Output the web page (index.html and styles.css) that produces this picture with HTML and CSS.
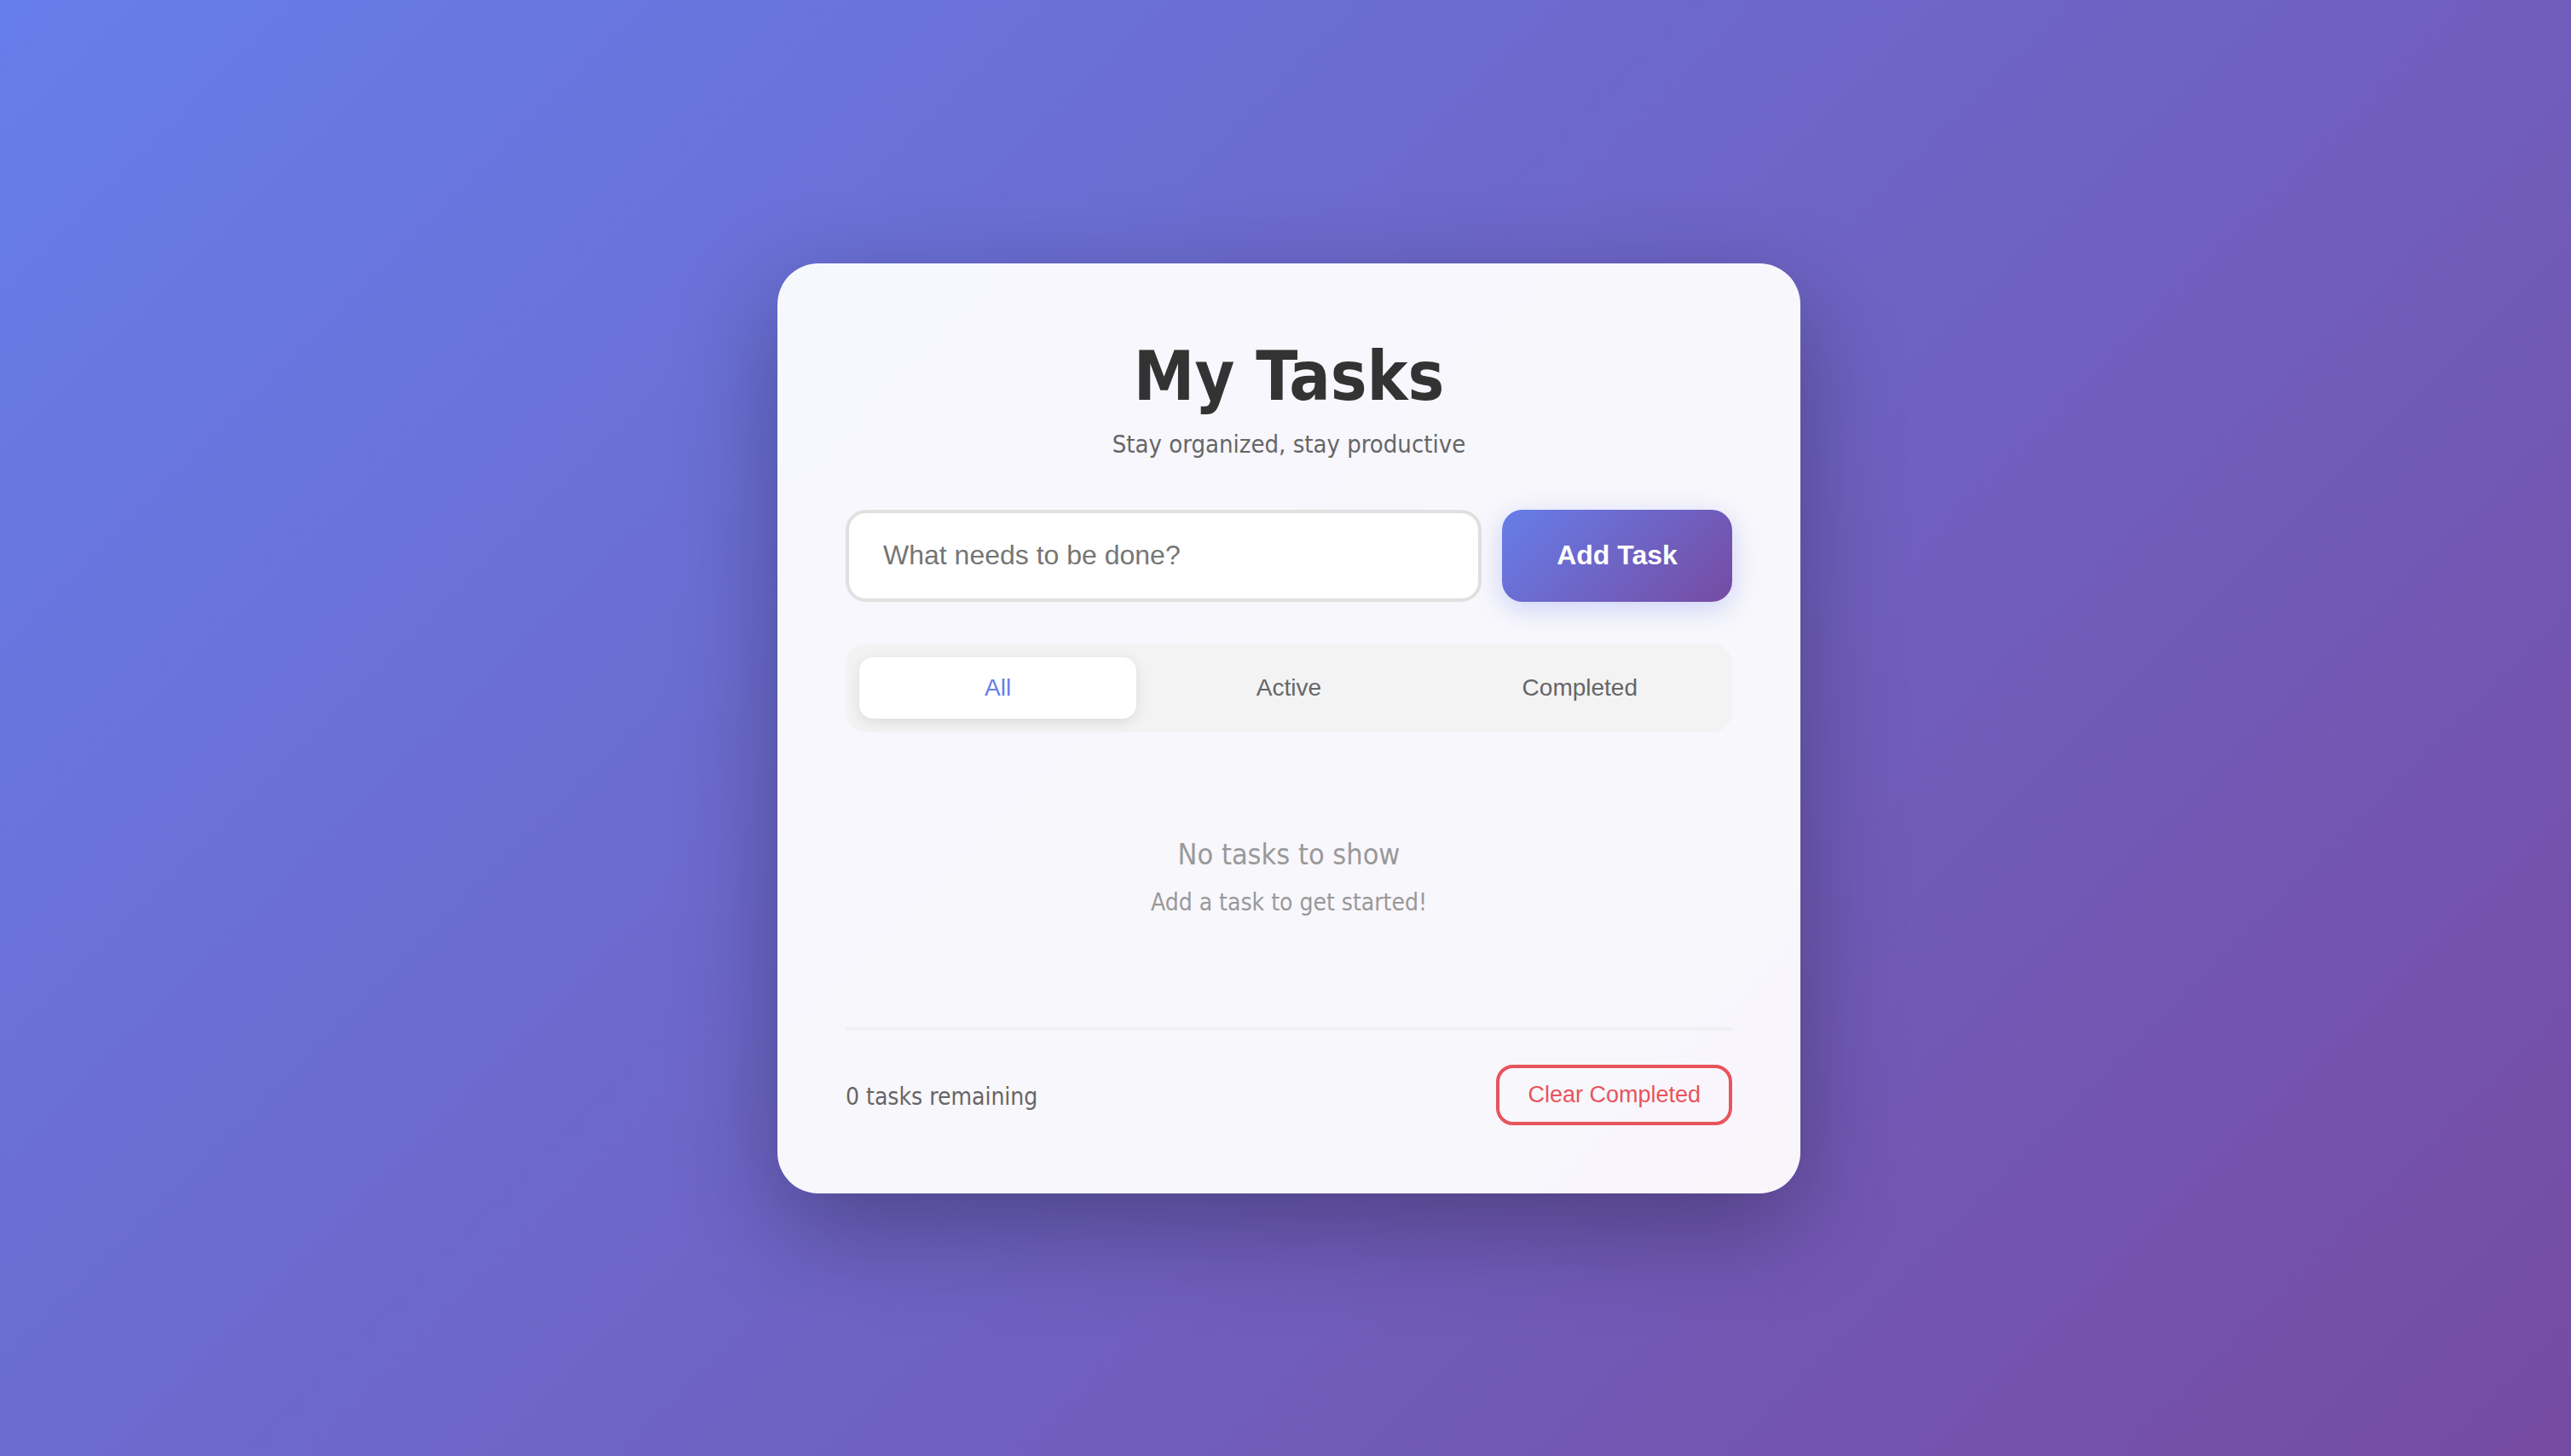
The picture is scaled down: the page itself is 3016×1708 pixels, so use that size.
FILE: index.html
```html
<!DOCTYPE html>
<html lang="en">
<head>
<meta charset="utf-8">
<title>My Tasks</title>
<link rel="stylesheet" href="styles.css">
</head>
<body>
<main class="page">
  <section class="card">
    <header class="header">
      <h1 class="title">My Tasks</h1>
      <p class="subtitle">Stay organized, stay productive</p>
    </header>
    <div class="add-row">
      <input class="task-input" type="text" placeholder="What needs to be done?">
      <button class="add-btn" type="button">Add Task</button>
    </div>
    <nav class="filters">
      <button class="filter filter-active" type="button">All</button>
      <button class="filter" type="button">Active</button>
      <button class="filter" type="button">Completed</button>
    </nav>
    <div class="task-list">
      <div class="empty">
        <p class="empty-title">No tasks to show</p>
        <p class="empty-sub">Add a task to get started!</p>
      </div>
    </div>
    <footer class="footer">
      <span class="count">0 tasks remaining</span>
      <button class="clear-btn" type="button">Clear Completed</button>
    </footer>
  </section>
</main>
</body>
</html>
```
FILE: styles.css
```css
html, body {
  margin: 0;
  padding: 0;
}

body {
  min-height: 100vh;
  background: linear-gradient(135deg, #667eea 0%, #764ba2 100%);
  font-family: "DejaVu Sans Condensed", "DejaVu Sans", sans-serif;
  font-stretch: condensed;
}

.page {
  min-height: 100vh;
  box-sizing: border-box;
  display: flex;
  align-items: center;
  justify-content: center;
  padding-left: 8px;
}

.card {
  width: 1200px;
  box-sizing: border-box;
  padding: 80px;
  background: rgba(255, 255, 255, 0.95);
  border-radius: 48px;
  box-shadow: 0 40px 120px rgba(0, 0, 0, 0.3);
}

.header {
  text-align: center;
  margin-bottom: 57px;
}

.title {
  margin: 0;
  font-size: 80px;
  line-height: 106px;
  font-weight: bold;
  color: #333333;
}

.subtitle {
  margin: 6px 0 0;
  font-size: 29px;
  line-height: 40px;
  color: #666666;
}

.add-row {
  display: flex;
  gap: 24px;
  height: 108px;
  margin-bottom: 49px;
}

.task-input {
  flex: 1;
  min-width: 0;
  box-sizing: border-box;
  height: 108px;
  padding: 0 40px;
  border: 4px solid #e0e0e0;
  border-radius: 24px;
  background: #ffffff;
  font-family: "Liberation Sans", Arial, sans-serif;
  font-size: 32px;
  color: #333333;
  outline: none;
}

.task-input::placeholder {
  color: #757575;
}

.add-btn {
  width: 270px;
  height: 108px;
  padding: 0;
  border: none;
  border-radius: 24px;
  background: linear-gradient(135deg, #667eea 0%, #764ba2 100%);
  box-shadow: 0 8px 30px rgba(102, 126, 234, 0.3);
  color: #ffffff;
  font-family: "Liberation Sans", Arial, sans-serif;
  font-size: 32px;
  font-weight: bold;
}

.filters {
  display: flex;
  gap: 16px;
  padding: 16px;
  background: #f3f3f4;
  border-radius: 24px;
  margin-bottom: 59px;
}

.filter {
  flex: 1;
  height: 72px;
  border: none;
  border-radius: 16px;
  background: transparent;
  color: #666666;
  font-family: "Liberation Sans", Arial, sans-serif;
  font-size: 28px;
}

.filter-active {
  background: #ffffff;
  color: #667eea;
  box-shadow: 0 4px 16px rgba(0, 0, 0, 0.1);
}

.empty {
  text-align: center;
  padding: 64px 0;
  color: #999999;
}

.empty-title {
  margin: 0;
  font-size: 34px;
  line-height: 40px;
}

.empty-sub {
  margin: 20px 0 0;
  font-size: 28px;
  line-height: 34px;
}

.footer {
  margin-top: 65px;
  border-top: 4px solid #f0f0f0;
  padding-top: 40px;
  display: flex;
  justify-content: space-between;
  align-items: center;
}

.count {
  font-size: 28px;
  line-height: 34px;
  padding-top: 6px;
  color: #666666;
}

.clear-btn {
  padding: 16px 33px;
  border: 4px solid #e8545c;
  border-radius: 20px;
  background: transparent;
  color: #e8545c;
  font-family: "Liberation Sans", Arial, sans-serif;
  font-size: 27px;
  line-height: 31px;
}
```
